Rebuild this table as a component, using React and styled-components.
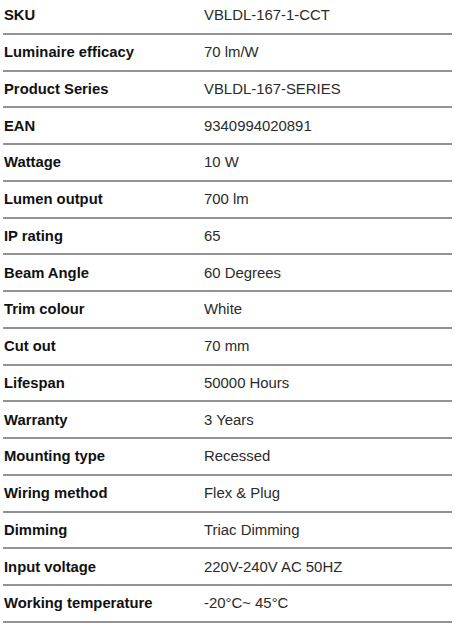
import React from "react";
import styled, { createGlobalStyle } from "styled-components";

const Global = createGlobalStyle`
  html, body { margin: 0; padding: 0; background: #fff; }
  body { font-family: "Liberation Sans", Arial, sans-serif; }
`;

const Table = styled.div`
  width: 449px;
  margin: -2px 0 0 3px;
  display: flex;
  flex-direction: column;
`;

const Row = styled.div`
  display: grid;
  grid-template-columns: 201px 1fr;
  align-items: center;
  height: 36.75px;
  box-sizing: border-box;
  border-bottom: 2px solid #939393;
`;

const Label = styled.div`
  font-weight: 700;
  font-size: 14.8px;
  color: #111;
  padding-left: 1px;
`;

const Value = styled.div`
  font-size: 14.9px;
  color: #2b2b2b;
`;

const rows = [
  ["SKU", "VBLDL-167-1-CCT"],
  ["Luminaire efficacy", "70 lm/W"],
  ["Product Series", "VBLDL-167-SERIES"],
  ["EAN", "9340994020891"],
  ["Wattage", "10 W"],
  ["Lumen output", "700 lm"],
  ["IP rating", "65"],
  ["Beam Angle", "60 Degrees"],
  ["Trim colour", "White"],
  ["Cut out", "70 mm"],
  ["Lifespan", "50000 Hours"],
  ["Warranty", "3 Years"],
  ["Mounting type", "Recessed"],
  ["Wiring method", "Flex & Plug"],
  ["Dimming", "Triac Dimming"],
  ["Input voltage", "220V-240V AC 50HZ"],
  ["Working temperature", "-20°C~ 45°C"],
];

export default function App() {
  return (
    <>
      <Global />
      <Table>
        {rows.map(([k, v]) => (
          <Row key={k}>
            <Label>{k}</Label>
            <Value>{v}</Value>
          </Row>
        ))}
      </Table>
    </>
  );
}
